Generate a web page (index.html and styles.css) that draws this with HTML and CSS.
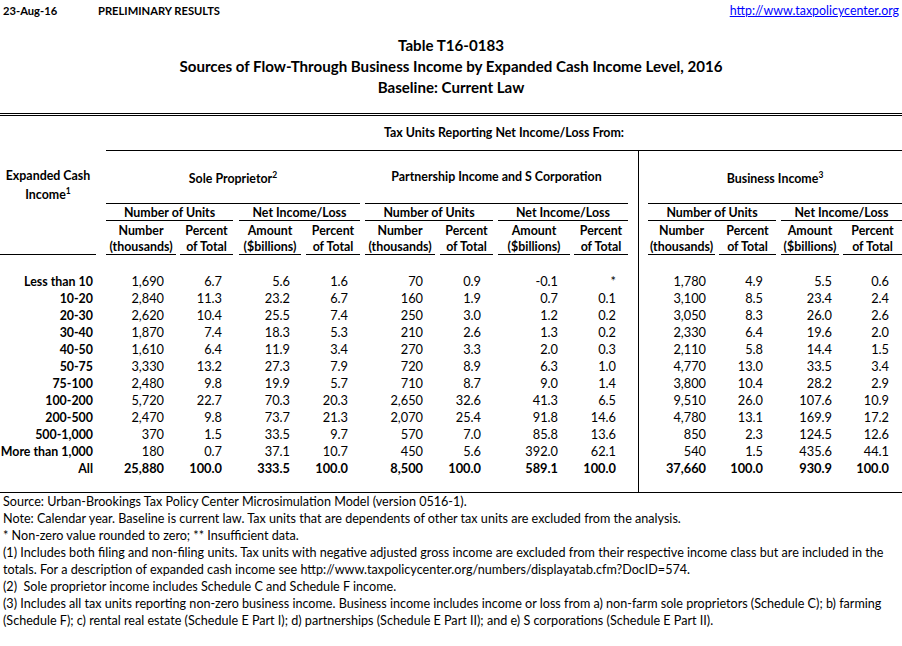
FILE: index.html
```html
<!DOCTYPE html>
<html>
<head>
<meta charset="utf-8">
<link rel="stylesheet" href="styles.css">
</head>
<body>
<div class="top">
  <span class="date">23-Aug-16</span>
  <span>PRELIMINARY RESULTS</span>
  <a class="url" href="#">http://www.taxpolicycenter.org</a>
</div>
<div class="titles">
  <div>Table T16-0183</div>
  <div>Sources of Flow-Through Business Income by Expanded Cash Income Level, 2016</div>
  <div>Baseline: Current Law</div>
</div>
<div class="tbl">
  <div class="thead">
    <div class="h lab"><span>Expanded Cash<br>Income<sup>1</sup></span></div>
    <div class="h tax"><span>Tax Units Reporting Net Income/Loss From:</span></div>
    <div class="h g1"><span class="low">Sole Proprietor<sup>2</sup></span></div>
    <div class="h g2"><span>Partnership Income and S Corporation</span></div>
    <div class="h g3"><span class="low">Business Income<sup>3</sup></span></div>
    <div class="h s s1"><span>Number of Units</span></div>
    <div class="h s s2"><span>Net Income/Loss</span></div>
    <div class="h s s3"><span>Number of Units</span></div>
    <div class="h s s4"><span>Net Income/Loss</span></div>
    <div class="h s s5"><span>Number of Units</span></div>
    <div class="h s s6"><span>Net Income/Loss</span></div>
    <div class="h k k1"><span>Number<br>(thousands)</span></div>
    <div class="h k k2"><span>Percent<br>of Total</span></div>
    <div class="h k k3"><span>Amount<br>($billions)</span></div>
    <div class="h k k4"><span>Percent<br>of Total</span></div>
    <div class="h k k5"><span>Number<br>(thousands)</span></div>
    <div class="h k k6"><span>Percent<br>of Total</span></div>
    <div class="h k k7"><span>Amount<br>($billions)</span></div>
    <div class="h k k8"><span>Percent<br>of Total</span></div>
    <div class="h k k9"><span>Number<br>(thousands)</span></div>
    <div class="h k k10"><span>Percent<br>of Total</span></div>
    <div class="h k k11"><span>Amount<br>($billions)</span></div>
    <div class="h k k12"><span>Percent<br>of Total</span></div>
  </div>
  <div class="tbody">
    <div class="r"><div>Less than 10</div><div>1,690</div><div>6.7</div><div>5.6</div><div>1.6</div><div>70</div><div>0.9</div><div>-0.1</div><div>*</div><div>1,780</div><div>4.9</div><div>5.5</div><div>0.6</div></div>
    <div class="r"><div>10-20</div><div>2,840</div><div>11.3</div><div>23.2</div><div>6.7</div><div>160</div><div>1.9</div><div>0.7</div><div>0.1</div><div>3,100</div><div>8.5</div><div>23.4</div><div>2.4</div></div>
    <div class="r"><div>20-30</div><div>2,620</div><div>10.4</div><div>25.5</div><div>7.4</div><div>250</div><div>3.0</div><div>1.2</div><div>0.2</div><div>3,050</div><div>8.3</div><div>26.0</div><div>2.6</div></div>
    <div class="r"><div>30-40</div><div>1,870</div><div>7.4</div><div>18.3</div><div>5.3</div><div>210</div><div>2.6</div><div>1.3</div><div>0.2</div><div>2,330</div><div>6.4</div><div>19.6</div><div>2.0</div></div>
    <div class="r"><div>40-50</div><div>1,610</div><div>6.4</div><div>11.9</div><div>3.4</div><div>270</div><div>3.3</div><div>2.0</div><div>0.3</div><div>2,110</div><div>5.8</div><div>14.4</div><div>1.5</div></div>
    <div class="r"><div>50-75</div><div>3,330</div><div>13.2</div><div>27.3</div><div>7.9</div><div>720</div><div>8.9</div><div>6.3</div><div>1.0</div><div>4,770</div><div>13.0</div><div>33.5</div><div>3.4</div></div>
    <div class="r"><div>75-100</div><div>2,480</div><div>9.8</div><div>19.9</div><div>5.7</div><div>710</div><div>8.7</div><div>9.0</div><div>1.4</div><div>3,800</div><div>10.4</div><div>28.2</div><div>2.9</div></div>
    <div class="r"><div>100-200</div><div>5,720</div><div>22.7</div><div>70.3</div><div>20.3</div><div>2,650</div><div>32.6</div><div>41.3</div><div>6.5</div><div>9,510</div><div>26.0</div><div>107.6</div><div>10.9</div></div>
    <div class="r"><div>200-500</div><div>2,470</div><div>9.8</div><div>73.7</div><div>21.3</div><div>2,070</div><div>25.4</div><div>91.8</div><div>14.6</div><div>4,780</div><div>13.1</div><div>169.9</div><div>17.2</div></div>
    <div class="r"><div>500-1,000</div><div>370</div><div>1.5</div><div>33.5</div><div>9.7</div><div>570</div><div>7.0</div><div>85.8</div><div>13.6</div><div>850</div><div>2.3</div><div>124.5</div><div>12.6</div></div>
    <div class="r"><div>More than 1,000</div><div>180</div><div>0.7</div><div>37.1</div><div>10.7</div><div>450</div><div>5.6</div><div>392.0</div><div>62.1</div><div>540</div><div>1.5</div><div>435.6</div><div>44.1</div></div>
    <div class="r all"><div>All</div><div>25,880</div><div>100.0</div><div>333.5</div><div>100.0</div><div>8,500</div><div>100.0</div><div>589.1</div><div>100.0</div><div>37,660</div><div>100.0</div><div>930.9</div><div>100.0</div></div>
  </div>
</div>
<div class="notes">
  <p>Source: Urban-Brookings Tax Policy Center Microsimulation Model (version 0516-1).</p>
  <p>Note: Calendar year. Baseline is current law. Tax units that are dependents of other tax units are excluded from the analysis.</p>
  <p>* Non-zero value rounded to zero; ** Insufficient data.</p>
  <p>(1) Includes both filing and non-filing units. Tax units with negative adjusted gross income are excluded from their respective income class but are included in the<br>totals. For a description of expanded cash income see http://www.taxpolicycenter.org/numbers/displayatab.cfm?DocID=574.</p>
  <p>(2)&nbsp; Sole proprietor income includes Schedule C and Schedule F income.</p>
  <p>(3) Includes all tax units reporting non-zero business income. Business income includes income or loss from a) non-farm sole proprietors (Schedule C); b) farming<br>(Schedule F); c) rental real estate (Schedule E Part I); d) partnerships (Schedule E Part II); and e) S corporations (Schedule E Part II).</p>
</div>
</body>
</html>
```

FILE: styles.css
```css
* { box-sizing: border-box; margin: 0; padding: 0; }
body {
  width: 902px;
  font-family: Lato, "Liberation Sans", sans-serif;
  font-size: 12.8px;
  color: #000;
  background: #fff;
}
sup { font-size: 8.5px; vertical-align: 5px; line-height: 0; }

.top {
  display: flex;
  padding: 2px 3px 0;
  line-height: 17px;
  font-weight: 700;
  font-size: 11.2px;
}
.date { width: 95px; }
.url { margin-left: auto; font-weight: 400; font-size: 12.4px; color: #00f; text-decoration: underline; }

.titles {
  margin-top: 16px;
  text-align: center;
  font-weight: 700;
  font-size: 15.1px;
  line-height: 21px;
}

.tbl {
  margin-top: 15px;
  border-top: 3px double #000;
  border-bottom: 1px solid #000;
  background: linear-gradient(#000, #000) no-repeat 638px 35px / 1px calc(100% - 35px);
}
.thead, .r {
  display: grid;
  grid-template-columns: 96px 80px 57px 68px 59px 75px 58px 77px 58px 10px 10px 67px 61px 63px 63px;
}
.thead {
  grid-template-rows: 35px 53px 17px 34px;
  font-weight: 700;
  font-size: 12.4px;
}
.h {
  display: flex;
  align-items: center;
  justify-content: center;
  text-align: center;
  border-bottom: 1px solid #000;
  line-height: 16px;
  white-space: nowrap;
}
.lab { grid-column: 1; grid-row: 1 / 5; line-height: 19px; }
.tax { grid-column: 2 / 16; grid-row: 1; margin-left: 10px; }
.g1 { grid-column: 2 / 6; grid-row: 2; margin-left: 10px; }
.g2 { grid-column: 6 / 10; grid-row: 2; margin-left: 5px; }
.g3 { grid-column: 12 / 16; grid-row: 2; }
.low { margin-top: 4px; }
.s { padding-top: 2px; }
.s1 { grid-column: 2 / 4; grid-row: 3; margin-left: 10px; }
.s2 { grid-column: 4 / 6; grid-row: 3; margin-left: 6px; }
.s3 { grid-column: 6 / 8; grid-row: 3; margin-left: 5px; }
.s4 { grid-column: 8 / 10; grid-row: 3; margin-left: 5px; }
.s5 { grid-column: 12 / 14; grid-row: 3; }
.s6 { grid-column: 14 / 16; grid-row: 3; margin-left: 5px; }
.k { grid-row: 4; padding-top: 2px; }
.k1 { grid-column: 2; margin-left: 10px; }
.k2 { grid-column: 3; margin-left: 4px; }
.k3 { grid-column: 4; margin-left: 6px; }
.k4 { grid-column: 5; margin-left: 5px; }
.k5 { grid-column: 6; margin-left: 5px; }
.k6 { grid-column: 7; margin-left: 5px; }
.k7 { grid-column: 8; margin-left: 5px; }
.k8 { grid-column: 9; margin-left: 4px; }
.k9 { grid-column: 12; }
.k10 { grid-column: 13; margin-left: 4px; }
.k11 { grid-column: 14; margin-left: 5px; }
.k12 { grid-column: 15; margin-left: 4px; }

.tbody { padding: 18px 0 15px; }
.r { height: 17px; line-height: 17px; text-align: right; white-space: nowrap; }
.r > :nth-child(1) { padding-right: 3px; font-weight: 700; font-size: 12.4px; }
.r > :nth-child(2) { padding-right: 12px; }
.r > :nth-child(3) { padding-right: 11px; }
.r > :nth-child(4) { padding-right: 11px; }
.r > :nth-child(5) { padding-right: 12px; }
.r > :nth-child(6) { padding-right: 12px; }
.r > :nth-child(7) { padding-right: 12px; }
.r > :nth-child(8) { padding-right: 12px; }
.r > :nth-child(9) { padding-right: 12px; }
.r > :nth-child(10) { grid-column: 12; padding-right: 9px; }
.r > :nth-child(11) { padding-right: 13px; }
.r > :nth-child(12) { padding-right: 7px; }
.r > :nth-child(13) { padding-right: 13px; }
.r.all { font-weight: 700; }

.notes {
  padding-left: 3px;
  line-height: 17px;
  font-size: 12.6px;
  white-space: nowrap;
}
```
